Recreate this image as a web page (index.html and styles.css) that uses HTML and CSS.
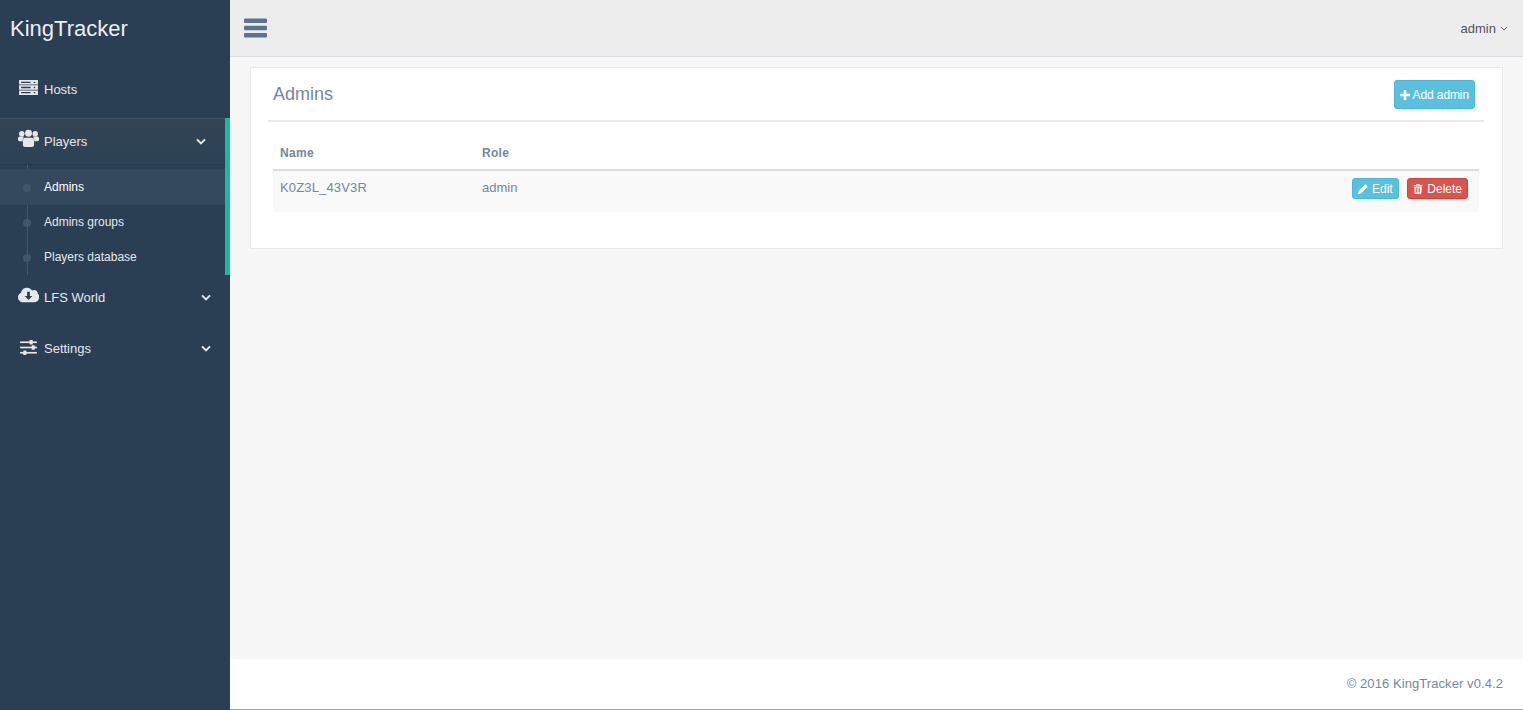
FILE: index.html
```html
<!DOCTYPE html>
<html lang="en">
<head>
<meta charset="utf-8">
<title>KingTracker</title>
<link rel="stylesheet" href="styles.css">
</head>
<body>
<svg class="defs" aria-hidden="true">
  <symbol id="i-chev" viewBox="0 0 12 8"><path d="M1.2 1.400 6 6.200l4.800-4.800" fill="none" stroke="currentColor" stroke-width="2.400"/></symbol>
</svg>
<aside class="sidebar">
  <div class="brand">KingTracker</div>
  <nav class="menu">
    <a class="item item-hosts">
      <svg class="ico" viewBox="0 0 20 18"><path fill="currentColor" fill-rule="evenodd" d="M1 1h18v4.300H1zM1 5.900h18v4.300H1zM1 10.800h18v4.300H1zM3 2.500v1.300h9V2.500zM3 7.400v1.300h9V7.400zM3 12.300v1.300h9v-1.300zM15 2.500v1.300h1.400V2.500zM15 7.400v1.300h1.400V7.400zM15 12.300v1.300h1.400v-1.300z"/></svg>
      <span>Hosts</span>
    </a>
    <div class="group">
      <a class="item item-open">
        <svg class="ico" viewBox="0 0 20 18"><g fill="currentColor"><circle cx="3.600" cy="4.400" r="2.600"/><circle cx="16.400" cy="4.400" r="2.600"/><circle cx="10" cy="4" r="3.300"/><path d="M0 8.600c0-1 1-1.600 2-1.600h3c.4 0 .6.200.8.400-.8.900-1.300 2-1.300 3.300 0 .3 0 .6.100.9H1.500C.6 11.600 0 11 0 10.200zM20 8.600c0-1-1-1.600-2-1.600h-3c-.4 0-.6.200-.8.400.8.900 1.300 2 1.300 3.300 0 .3 0 .6-.1.900h3.100c.9 0 1.500-.6 1.500-1.400z"/><path d="M6.800 8.200h6.400c1.300 0 2.100 1 2.100 2.300v4.600c0 1.200-.9 1.900-2 1.900H6.700c-1.100 0-2-.7-2-1.900v-4.600c0-1.300.8-2.300 2.100-2.300z"/></g></svg>
        <span>Players</span>
        <svg class="chev"><use href="#i-chev"/></svg>
      </a>
      <ul class="sub">
        <li class="sub-item current"><i class="dot"></i><span>Admins</span></li>
        <li class="sub-item"><i class="dot"></i><span>Admins groups</span></li>
        <li class="sub-item"><i class="dot"></i><span>Players database</span></li>
      </ul>
    </div>
    <a class="item item-plain item-cloud">
      <svg class="ico" viewBox="0 0 20 18"><path fill="currentColor" d="M5 15.500C2.200 15.500 0 13.400 0 10.700c0-2 1.200-3.700 2.900-4.400C3.300 3.700 5.500 1.500 8.500 1.500c2.100 0 3.900 1.100 4.900 2.800.6-.3 1.200-.5 1.900-.5 2 0 3.500 1.500 3.600 3.500.9.700 1.500 1.900 1.100 3.300.3 2.900-1.900 4.900-4.800 4.900z"/><path fill="#2A3F54" d="M8.700 5.500h2.600v4h2.300L10 13.200 6.400 9.500h2.300z"/></svg>
      <span>LFS World</span>
      <svg class="chev"><use href="#i-chev"/></svg>
    </a>
    <a class="item item-plain">
      <svg class="ico" viewBox="0 0 20 18"><g fill="currentColor"><rect x="2" y="3.200" width="16" height="1.600"/><rect x="2" y="8.200" width="16" height="1.600"/><rect x="2" y="13.200" width="16" height="1.600"/><rect x="11" y="1.800" width="3" height="4.400" rx=".5"/><rect x="13" y="6.800" width="3" height="4.400" rx=".5"/><rect x="5" y="11.800" width="3" height="4.400" rx=".5"/></g></svg>
      <span>Settings</span>
      <svg class="chev"><use href="#i-chev"/></svg>
    </a>
  </nav>
</aside>
<div class="main">
  <header class="topbar">
    <svg class="burger" viewBox="0 0 23 20"><g fill="currentColor"><rect y=".5" width="23" height="4.500" rx="1"/><rect y="7.800" width="23" height="4.500" rx="1"/><rect y="15" width="23" height="4.500" rx="1"/></g></svg>
    <div class="user">admin <svg class="angle" viewBox="0 0 10 6"><path d="M1 1l4 4 4-4" fill="none" stroke="currentColor" stroke-width="1.100"/></svg></div>
  </header>
  <main class="content">
    <section class="panel">
      <div class="panel-head">
        <h2>Admins</h2>
        <button class="btn btn-info btn-add">
          <svg class="btn-ico" viewBox="0 0 10 10"><path fill="currentColor" d="M3.700 0h2.600v3.700H10v2.600H6.300V10H3.700V6.300H0V3.700h3.700z"/></svg>Add admin
        </button>
      </div>
      <table class="grid">
        <thead><tr><th class="col-name">Name</th><th class="col-role">Role</th><th></th></tr></thead>
        <tbody>
          <tr>
            <td class="cell-name">K0Z3L_43V3R</td>
            <td>admin</td>
            <td class="actions">
              <button class="btn btn-info btn-xs"><svg class="btn-ico" viewBox="0 0 10 10"><path fill="currentColor" d="M0 10l.6-3L6.800.8c.4-.4 1-.4 1.400 0l1 1c.4.4.4 1 0 1.400L3 9.400z"/></svg>Edit</button>
              <button class="btn btn-danger btn-xs"><svg class="btn-ico" viewBox="0 0 10 10"><path fill="currentColor" fill-rule="evenodd" d="M3.500 0h3l.6 1.200H9.500V2.300H.5V1.200h2.400zM1.200 2.800h7.600l-.4 6.200c0 .6-.4 1-1 1H2.600c-.6 0-1-.4-1-1zM3 4v4.500h.8V4zM4.600 4v4.500h.8V4zM6.200 4v4.500H7V4z"/></svg>Delete</button>
            </td>
          </tr>
        </tbody>
      </table>
    </section>
  </main>
  <footer class="footer">© 2016 KingTracker v0.4.2</footer>
</div>
</body>
</html>
```

FILE: styles.css
```css
* { box-sizing: border-box; }
html, body { height: 100%; }
body {
  margin: 0;
  display: flex;
  height: 710px;
  overflow: hidden;
  font-family: "Liberation Sans", Arial, sans-serif;
  font-size: 13px;
  color: #73879C;
  background: #F7F7F7;
}
.defs { display: none; }

.sidebar {
  width: 230px;
  flex: none;
  background: #2A3F54;
  color: #E7E7E7;
}
.brand {
  height: 57px;
  padding: 16px 0 0 10px;
  font-size: 22px;
  line-height: 25px;
  color: #ECF0F1;
}
.menu { display: flex; flex-direction: column; }
.item {
  display: flex;
  align-items: flex-start;
  line-height: 20px;
  position: relative;
}
.item-hosts { height: 61px; padding: 23px 0 0 18px; }
.ico { width: 21px; height: 19px; margin: -1px 5px 0 0; flex: none; }
.chev { position: absolute; right: 19px; top: 19px; width: 10px; height: 7px; }
.group { border-right: 5px solid #1ABB9C; }
.item-open {
  height: 46px;
  padding: 13px 0 0 18px;
  background: linear-gradient(#334556, #2C4257);
  border-top: 1px solid #3F5367;
  box-shadow: 0 1px 0 #23384C;
}
.item-open .ico { margin-top: -3px; }
.sub {
  list-style: none;
  margin: 0;
  padding: 5px 0 0;
  position: relative;
}
.sub::before {
  content: "";
  position: absolute;
  left: 27px;
  top: 0;
  bottom: 0;
  width: 1px;
  background: #425668;
}
.sub-item {
  height: 35px;
  padding: 8px 0 0 44px;
  font-size: 12px;
  line-height: 18px;
  position: relative;
}
.sub-item.current {
  height: 36px;
  padding-top: 9px;
  color: #fff;
  background: #34495E;
}
.dot {
  position: absolute;
  left: 23px;
  top: 14px;
  width: 8px;
  height: 8px;
  border-radius: 50%;
  background: #425668;
}
.current .dot { top: 15px; }
.item-plain { height: 51px; padding: 13px 0 0 18px; }
.item-cloud .ico { margin-top: -2px; }

.main {
  flex: 1;
  min-width: 0;
  display: flex;
  flex-direction: column;
}
.topbar {
  height: 57px;
  flex: none;
  display: flex;
  align-items: center;
  justify-content: space-between;
  padding: 0 15px 0 14px;
  background: #EDEDED;
  border-bottom: 1px solid #D9DEE4;
}
.burger { width: 23px; height: 20px; color: #5A738E; }
.user { font-size: 13px; color: #515356; display: flex; align-items: center; gap: 4px; }
.angle { width: 8px; height: 5px; }

.content { flex: 1; padding: 10px 20px 0; }
.panel {
  height: 182px;
  background: #fff;
  border: 1px solid #E6E9ED;
  padding: 0 18px 0 17px;
}
.panel-head {
  height: 54px;
  display: flex;
  justify-content: space-between;
  align-items: flex-start;
  border-bottom: 2px solid #E6E9ED;
  padding: 12px 9px 0 5px;
}
.panel-head h2 {
  margin: 4px 0 0;
  font-size: 18px;
  font-weight: 400;
  line-height: 21px;
}
.btn {
  border: 1px solid transparent;
  color: #fff;
  font-family: inherit;
  display: inline-flex;
  align-items: center;
}
.btn-info { background: #5BC0DE; border-color: #46B8DA; }
.btn-danger { background: #D9534F; border-color: #D43F3A; }
.btn-add {
  height: 29px;
  padding: 0 5px;
  border-radius: 3px;
  font-size: 12px;
  font-weight: 400;
  letter-spacing: -.1px;
}
.btn-ico { width: 10px; height: 10px; margin-right: 3px; }
.btn-xs {
  height: 21px;
  padding: 0 5px;
  border-radius: 3px;
  font-size: 12px;
}
.btn-xs .btn-ico { margin-right: 4px; }
.grid {
  width: 1206px;
  margin: 14px 0 0 5px;
  border-collapse: collapse;
  table-layout: fixed;
}
.grid th {
  height: 34px;
  text-align: left;
  font-size: 12px;
  letter-spacing: .3px;
  padding: 0 7px;
  border-bottom: 2px solid #DDD;
  color: #73879C;
}
.col-name { width: 202px; }
.col-role { width: 200px; }
.grid td {
  height: 42px;
  padding: 8px 7px 0;
  vertical-align: top;
  background: #F9F9F9;
  line-height: 18px;
}
.grid td.cell-name { letter-spacing: .15px; }
.grid td.actions { text-align: right; padding: 7px 11px 0 0; }
.actions .btn + .btn { margin-left: 5px; }

.footer {
  height: 51px;
  flex: none;
  background: #fff;
  text-align: right;
  padding: 16px 20px 0 0;
  font-size: 13px;
  line-height: 18px;
  letter-spacing: .08px;
  border-bottom: 1px solid #A0A4A8;
}
```
